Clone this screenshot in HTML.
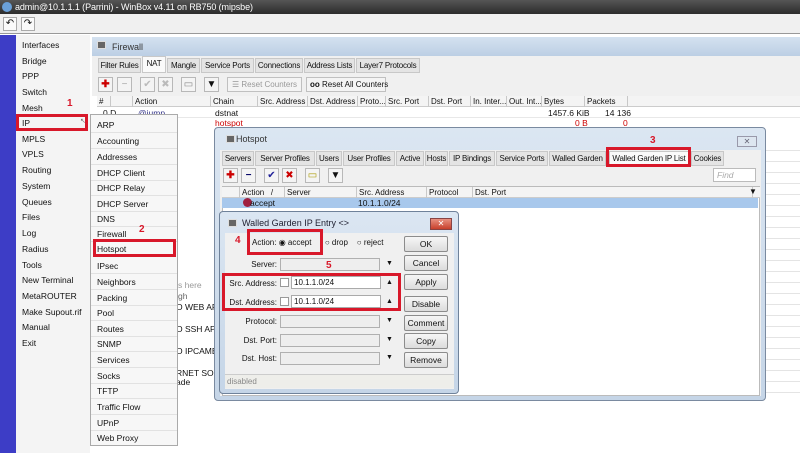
<!DOCTYPE html>
<html><head><meta charset="utf-8"><style>
*{margin:0;padding:0;box-sizing:border-box}
body{width:800px;height:453px;overflow:hidden;background:#fff;font-family:"Liberation Sans",sans-serif;font-size:8.5px;color:#111;position:relative}
.a{position:absolute;white-space:nowrap}
.mi{position:absolute;left:22px;font-size:8.5px}
.si{position:absolute;left:97px;font-size:8.5px}
.sl{position:absolute;left:91px;width:86px;height:1px;background:#e2e2e2}
.red{position:absolute;border:3px solid #d8182a}
.rn{position:absolute;color:#d8182a;font-weight:bold;font-size:10px}
.tab{position:absolute;height:15px;border:1px solid #c8c8c8;background:#e4e4e4;font-size:8px;letter-spacing:-0.2px;text-align:center;line-height:13px;overflow:hidden;white-space:nowrap}
.tb{position:absolute;width:15px;height:15px;border:1px solid #b8b8b8;background:#f4f4f4;text-align:center;font-size:10px;line-height:13px}
.btn{position:absolute;left:404px;width:44px;height:16px;border:1px solid #8c8c8c;background:linear-gradient(#f6f6f6,#dcdcdc);text-align:center;font-size:8.5px;line-height:14px;border-radius:2px}
.lbl{position:absolute;font-size:8px;text-align:right;width:55px;left:222px}
.fld{position:absolute;left:280px;width:100px;height:13px;border:1px solid #b0b0b0;background:#eee}
.arr{position:absolute;left:386px;font-size:7px}
.hc{position:absolute;top:0;height:11px;border-right:1px solid #c8c8c8;padding-left:2px;font-size:8px;line-height:11px;overflow:hidden}
</style></head><body>
<div class="a" style="left:0;top:0;width:800px;height:14px;background:linear-gradient(#555,#2c2c2c)"></div>
<div class="a" style="left:2px;top:2px;width:10px;height:10px;border-radius:50%;background:#6aa0d8"></div>
<div class="a" style="left:15px;top:2px;color:#fff;font-size:9px;letter-spacing:-0.1px">admin@10.1.1.1 (Parrini) - WinBox v4.11 on RB750 (mipsbe)</div>
<div class="a" style="left:0;top:14px;width:800px;height:20px;background:#f0f0f0;border-bottom:1px solid #999"></div>
<div class="a" style="left:3px;top:17px;width:14px;height:14px;border:1px solid #aaa;background:#fafafa;font-size:10px;text-align:center;line-height:12px">↶</div>
<div class="a" style="left:21px;top:17px;width:14px;height:14px;border:1px solid #aaa;background:#fafafa;font-size:10px;text-align:center;line-height:12px">↷</div>
<div class="a" style="left:0;top:35px;width:16px;height:418px;background:#3d3dc6"></div>
<div class="a" style="left:16px;top:35px;width:74px;height:418px;background:#f4f4f4"></div>
<div class="mi" style="top:40px">Interfaces</div><div class="mi" style="top:56px">Bridge</div><div class="mi" style="top:71px">PPP</div><div class="mi" style="top:87px">Switch</div><div class="mi" style="top:103px">Mesh</div><div class="mi" style="top:118px">IP</div><div class="mi" style="top:134px">MPLS</div><div class="mi" style="top:149px">VPLS</div><div class="mi" style="top:165px">Routing</div><div class="mi" style="top:181px">System</div><div class="mi" style="top:197px">Queues</div><div class="mi" style="top:212px">Files</div><div class="mi" style="top:228px">Log</div><div class="mi" style="top:244px">Radius</div><div class="mi" style="top:260px">Tools</div><div class="mi" style="top:275px">New Terminal</div><div class="mi" style="top:291px">MetaROUTER</div><div class="mi" style="top:307px">Make Supout.rif</div><div class="mi" style="top:322px">Manual</div><div class="mi" style="top:338px">Exit</div>
<div class="a" style="left:80px;top:117px;font-size:7px;color:#777">↖</div>
<div class="red" style="left:16px;top:114px;width:72px;height:17px"></div>
<div class="rn" style="left:67px;top:98px">1</div>
<!-- firewall -->
<div class="a" style="left:90px;top:35px;width:710px;height:418px;background:#fff"></div>
<div class="a" style="left:92px;top:37px;width:708px;height:19px;background:linear-gradient(#d4e2f0,#bccfe4)"></div>
<div class="a" style="left:97px;top:41px;width:9px;height:8px;background:#666;border:1px solid #ddd"></div>
<div class="a" style="left:112px;top:42px;font-size:9px;color:#333">Firewall</div>
<div class="a" style="left:92px;top:56px;width:708px;height:40px;background:#f0f0f0"></div>
<div class="tab" style="left:98px;top:58px;width:43px">Filter Rules</div><div class="tab" style="left:142px;top:56px;height:17px;width:24px;background:#fafafa">NAT</div><div class="tab" style="left:167px;top:58px;width:33px">Mangle</div><div class="tab" style="left:201px;top:58px;width:53px">Service Ports</div><div class="tab" style="left:255px;top:58px;width:48px">Connections</div><div class="tab" style="left:304px;top:58px;width:51px">Address Lists</div><div class="tab" style="left:356px;top:58px;width:64px">Layer7 Protocols</div>
<div class="tb" style="left:98px;top:77px;color:#c00;font-weight:bold">✚</div><div class="tb" style="left:117px;top:77px;color:#aaa">−</div><div class="tb" style="left:140px;top:77px;color:#bbb">✔</div><div class="tb" style="left:158px;top:77px;color:#bbb">✖</div><div class="tb" style="left:181px;top:77px;color:#888">▭</div><div class="tb" style="left:204px;top:77px">▼</div>
<div class="a" style="left:227px;top:77px;width:75px;height:15px;border:1px solid #c0c0c0;background:#f4f4f4;color:#999;padding:2px 4px;font-size:8px">☰ Reset Counters</div>
<div class="a" style="left:306px;top:77px;width:80px;height:15px;border:1px solid #c0c0c0;background:#f4f4f4;padding:2px 3px;font-size:8px"><b>oo</b> Reset All Counters</div>
<div class="a" style="left:97px;top:96px;width:703px;height:11px;background:#f4f4f4;border-bottom:1px solid #ccc">
<div class="hc" style="left:0;width:14px">#</div><div class="hc" style="left:14px;width:22px"></div><div class="hc" style="left:36px;width:78px">Action</div><div class="hc" style="left:114px;width:47px">Chain</div><div class="hc" style="left:161px;width:50px">Src. Address</div><div class="hc" style="left:211px;width:50px">Dst. Address</div><div class="hc" style="left:261px;width:28px">Proto...</div><div class="hc" style="left:289px;width:43px">Src. Port</div><div class="hc" style="left:332px;width:42px">Dst. Port</div><div class="hc" style="left:374px;width:36px">In. Inter...</div><div class="hc" style="left:410px;width:35px">Out. Int...</div><div class="hc" style="left:445px;width:43px">Bytes</div><div class="hc" style="left:488px;width:43px">Packets</div></div>
<div class="a" style="left:103px;top:108px">0 D</div><div class="a" style="left:138px;top:108px;color:#338">@jump</div><div class="a" style="left:215px;top:108px">dstnat</div><div class="a" style="left:548px;top:108px">1457.6 KiB</div><div class="a" style="left:605px;top:108px">14 136</div>
<div class="a" style="left:215px;top:118px;color:#c00">hotspot</div><div class="a" style="left:575px;top:118px;color:#c00">0 B</div><div class="a" style="left:623px;top:118px;color:#c00">0</div>
<div class="a" style="left:97px;top:117px;width:703px;height:1px;background:#e8e8e8"></div>
<div class="a" style="left:765px;top:140px;width:35px;height:260px;background:repeating-linear-gradient(#fff 0 10px,#e4e4e4 10px 11px)"></div>
<div class="a" style="left:178px;top:280px;color:#999">s here</div><div class="a" style="left:178px;top:291px;color:#666">gh</div><div class="a" style="left:176px;top:302px">O WEB AR</div><div class="a" style="left:176px;top:324px">O SSH AP</div><div class="a" style="left:176px;top:346px">O IPCAMB</div><div class="a" style="left:176px;top:368px">RNET SOB</div><div class="a" style="left:176px;top:377px">ade</div>
<!-- submenu -->
<div class="a" style="left:90px;top:114px;width:88px;height:332px;background:#f7f7f7;border:1px solid #aaa"></div>
<div class="si" style="top:120px">ARP</div><div class="si" style="top:136px">Accounting</div><div class="si" style="top:152px">Addresses</div><div class="si" style="top:168px">DHCP Client</div><div class="si" style="top:183px">DHCP Relay</div><div class="si" style="top:199px">DHCP Server</div><div class="si" style="top:214px">DNS</div><div class="si" style="top:229px">Firewall</div><div class="si" style="top:244px">Hotspot</div><div class="si" style="top:261px">IPsec</div><div class="si" style="top:277px">Neighbors</div><div class="si" style="top:293px">Packing</div><div class="si" style="top:308px">Pool</div><div class="si" style="top:324px">Routes</div><div class="si" style="top:339px">SNMP</div><div class="si" style="top:355px">Services</div><div class="si" style="top:371px">Socks</div><div class="si" style="top:386px">TFTP</div><div class="si" style="top:402px">Traffic Flow</div><div class="si" style="top:418px">UPnP</div><div class="si" style="top:433px">Web Proxy</div>
<div class="sl" style="top:132px"></div><div class="sl" style="top:148px"></div><div class="sl" style="top:164px"></div><div class="sl" style="top:180px"></div><div class="sl" style="top:195px"></div><div class="sl" style="top:211px"></div><div class="sl" style="top:226px"></div><div class="sl" style="top:241px"></div><div class="sl" style="top:273px"></div><div class="sl" style="top:289px"></div><div class="sl" style="top:305px"></div><div class="sl" style="top:320px"></div><div class="sl" style="top:336px"></div><div class="sl" style="top:351px"></div><div class="sl" style="top:367px"></div><div class="sl" style="top:383px"></div><div class="sl" style="top:398px"></div><div class="sl" style="top:414px"></div><div class="sl" style="top:430px"></div>
<div class="red" style="left:93px;top:239px;width:83px;height:18px"></div>
<div class="rn" style="left:139px;top:224px">2</div>
<!-- hotspot -->
<div class="a" style="left:214px;top:127px;width:552px;height:274px;background:linear-gradient(#dbe6f2,#c5d5e7);border:1px solid #7a8aa0;border-radius:4px"></div>
<div class="a" style="left:226px;top:135px;width:9px;height:8px;background:#666;border:1px solid #ddd"></div>
<div class="a" style="left:236px;top:134px;font-size:9px;color:#333">Hotspot</div>
<div class="a" style="left:737px;top:136px;width:20px;height:11px;border:1px solid #99a;background:#dde6f0;font-size:8px;text-align:center;line-height:9px;color:#667">✕</div>
<div class="a" style="left:220px;top:150px;width:541px;height:246px;background:#f0f0f0"></div>
<div class="tab" style="left:222px;top:151px;width:32px">Servers</div><div class="tab" style="left:255px;top:151px;width:60px">Server Profiles</div><div class="tab" style="left:316px;top:151px;width:26px">Users</div><div class="tab" style="left:343px;top:151px;width:52px">User Profiles</div><div class="tab" style="left:396px;top:151px;width:28px">Active</div><div class="tab" style="left:425px;top:151px;width:23px">Hosts</div><div class="tab" style="left:449px;top:151px;width:46px">IP Bindings</div><div class="tab" style="left:496px;top:151px;width:52px">Service Ports</div><div class="tab" style="left:549px;top:151px;width:57px">Walled Garden</div><div class="tab" style="left:609px;top:151px;width:80px;background:#fafafa">Walled Garden IP List</div><div class="tab" style="left:691px;top:151px;width:33px">Cookies</div>
<div class="red" style="left:606px;top:147px;width:85px;height:20px"></div>
<div class="rn" style="left:650px;top:135px">3</div>
<div class="tb" style="left:223px;top:168px;color:#c00;font-weight:bold">✚</div><div class="tb" style="left:241px;top:168px;color:#006;font-weight:bold">−</div><div class="tb" style="left:264px;top:168px;color:#229">✔</div><div class="tb" style="left:282px;top:168px;color:#c00">✖</div><div class="tb" style="left:305px;top:168px;color:#a90">▭</div><div class="tb" style="left:328px;top:168px">▼</div>
<div class="a" style="left:713px;top:168px;width:43px;height:14px;border:1px solid #bbb;background:#fff;color:#aaa;font-style:italic;padding:1px 3px">Find</div>
<div class="a" style="left:222px;top:186px;width:538px;height:210px;background:#fff;border:1px solid #bbb"></div>
<div class="a" style="left:222px;top:187px;width:538px;height:11px;background:#f4f4f4;border-bottom:1px solid #ccc">
<div class="hc" style="left:0;width:18px"></div><div class="hc" style="left:18px;width:45px">Action &nbsp; /</div><div class="hc" style="left:63px;width:72px">Server</div><div class="hc" style="left:135px;width:70px">Src. Address</div><div class="hc" style="left:205px;width:46px">Protocol</div><div class="hc" style="left:251px;width:280px">Dst. Port</div><div class="a" style="left:527px;top:0;font-size:8px">▼</div></div>
<div class="a" style="left:222px;top:198px;width:536px;height:10px;background:#a8c8ec"></div>
<div class="a" style="left:243px;top:198px;width:9px;height:9px;border-radius:50%;background:#a02040"></div>
<div class="a" style="left:250px;top:198px">accept</div><div class="a" style="left:358px;top:198px">10.1.1.0/24</div>
<!-- dialog -->
<div class="a" style="left:219px;top:211px;width:240px;height:183px;background:linear-gradient(#dbe6f2,#c5d5e7);border:1px solid #6f829a;border-radius:4px"></div>
<div class="a" style="left:228px;top:219px;width:9px;height:8px;background:#666;border:1px solid #ddd"></div>
<div class="a" style="left:242px;top:218px;font-size:9px;color:#223">Walled Garden IP Entry &lt;&gt;</div>
<div class="a" style="left:430px;top:218px;width:22px;height:12px;border:1px solid #844;background:linear-gradient(#e89080,#c8402c);color:#fff;font-size:8px;text-align:center;line-height:10px">✕</div>
<div class="a" style="left:225px;top:233px;width:229px;height:156px;background:#f0f0f0"></div>
<div class="a" style="left:252px;top:238px;font-size:8px">Action: <span>◉</span> accept &nbsp;&nbsp;&nbsp;&nbsp; <span>○</span> drop &nbsp;&nbsp; <span>○</span> reject</div>
<div class="red" style="left:247px;top:229px;width:76px;height:26px"></div>
<div class="rn" style="left:235px;top:235px">4</div>
<div class="lbl" style="top:260px">Server:</div><div class="fld" style="top:258px"></div><div class="arr" style="top:260px">▼</div>
<div class="rn" style="left:326px;top:260px">5</div>
<div class="lbl" style="top:279px">Src. Address:</div><div class="a" style="left:280px;top:278px;width:9px;height:9px;border:1px solid #999;background:#fff"></div><div class="a" style="left:291px;top:276px;width:90px;height:13px;border:1px solid #aaa;background:#fff;padding:1px 2px;font-size:8px">10.1.1.0/24</div><div class="arr" style="top:279px">▲</div>
<div class="lbl" style="top:298px">Dst. Address:</div><div class="a" style="left:280px;top:297px;width:9px;height:9px;border:1px solid #999;background:#fff"></div><div class="a" style="left:291px;top:295px;width:90px;height:13px;border:1px solid #aaa;background:#fff;padding:1px 2px;font-size:8px">10.1.1.0/24</div><div class="arr" style="top:298px">▲</div>
<div class="red" style="left:222px;top:273px;width:179px;height:38px"></div>
<div class="lbl" style="top:317px">Protocol:</div><div class="fld" style="top:315px"></div><div class="arr" style="top:317px">▼</div>
<div class="lbl" style="top:336px">Dst. Port:</div><div class="fld" style="top:334px"></div><div class="arr" style="top:336px">▼</div>
<div class="lbl" style="top:354px">Dst. Host:</div><div class="fld" style="top:352px"></div><div class="arr" style="top:354px">▼</div>
<div class="btn" style="top:236px">OK</div><div class="btn" style="top:255px">Cancel</div><div class="btn" style="top:274px">Apply</div><div class="btn" style="top:296px">Disable</div><div class="btn" style="top:315px">Comment</div><div class="btn" style="top:333px">Copy</div><div class="btn" style="top:352px">Remove</div>
<div class="a" style="left:225px;top:374px;width:229px;height:14px;border-top:1px solid #ccc;background:#eeeeea;color:#888;padding:2px 2px;font-size:8px">disabled</div>
</body></html>
